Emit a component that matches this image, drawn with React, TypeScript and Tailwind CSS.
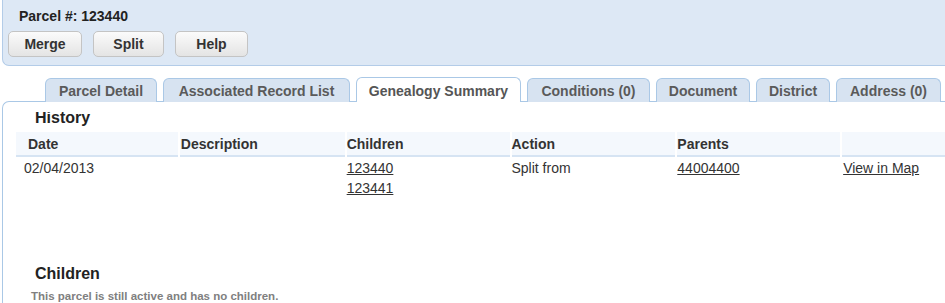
import React from "react";

const tabs = [
  { label: "Parcel Detail", w: 112, active: false },
  { label: "Associated Record List", w: 187, active: false },
  { label: "Genealogy Summary", w: 165, active: true },
  { label: "Conditions (0)", w: 123, active: false },
  { label: "Document", w: 94, active: false },
  { label: "District", w: 74, active: false },
  { label: "Address (0)", w: 105, active: false },
];

const cols = [
  { label: "Date", w: 162, pl: 12 },
  { label: "Description", w: 165, pl: 1 },
  { label: "Children", w: 163, pl: 0 },
  { label: "Action", w: 164, pl: 0 },
  { label: "Parents", w: 163, pl: 0 },
  { label: "", w: 120, pl: 0 },
];

function Btn({ label, w }: { label: string; w: number }) {
  return (
    <button
      className="h-[26px] rounded-[5px] border border-[#c4c4c4] bg-gradient-to-b from-[#fbfbfb] to-[#e4e4e4] text-[14px] font-bold text-[#333]"
      style={{ width: w }}
    >
      {label}
    </button>
  );
}

export default function App() {
  return (
    <div
      className="w-[945px] h-[303px] overflow-hidden bg-white text-[#333]"
      style={{ fontFamily: '"Liberation Sans", Arial, sans-serif' }}
    >
      {/* header */}
      <div className="ml-[2px] h-[66px] w-[960px] rounded-bl-[7px] border-l border-b border-[#b3cce8] bg-[#dde8f5]">
        <div className="pl-[16px] pt-[6px] text-[14px] font-bold leading-[20px] text-[#222]">
          Parcel #: 123440
        </div>
        <div className="mt-[5px] flex gap-[11px] pl-[5px]">
          <Btn label="Merge" w={74} />
          <Btn label="Split" w={71} />
          <Btn label="Help" w={73} />
        </div>
      </div>

      {/* tabs */}
      <div className="mt-[11px] flex h-[25px] items-end gap-[6px] pl-[45px]">
        {tabs.map((t) => (
          <div
            key={t.label}
            className={
              t.active
                ? "relative z-10 flex h-[25px] items-center justify-center rounded-t-[6px] border border-b-0 border-[#aac8e6] bg-white text-[14px] font-bold text-[#555]"
                : "flex h-[24px] items-center justify-center rounded-t-[6px] border border-b-0 border-[#aac8e6] bg-[#d7e3f1] text-[14px] font-bold text-[#5a5a5a]"
            }
            style={{ width: t.w, paddingTop: 2 }}
          >
            {t.label}
          </div>
        ))}
      </div>

      {/* content */}
      <div className="ml-[2px] -mt-px h-[220px] w-[960px] rounded-tl-[7px] border-l border-t border-[#aac8e6] bg-white">
        <div className="mt-[10px] h-[211px] overflow-hidden">
          <div className="-mt-[3px] pl-[32px] text-[16px] font-bold leading-[18px] text-[#222]">
            History
          </div>
          <div className="mt-[5px] ml-[13px] flex gap-[2px]">
            {cols.map((c, i) => (
              <div
                key={i}
                className="h-[25px] border-b-2 border-[#d6e4f3] bg-[#f4f8fd] text-[14px] font-bold leading-[24px] text-[#333]"
                style={{ width: c.w, paddingLeft: c.pl }}
              >
                {c.label}
              </div>
            ))}
          </div>
          <div className="ml-[13px] mt-[1px] flex gap-[2px] text-[14px] leading-[20px] text-[#333]">
            <div className="w-[162px] pl-[8px]">02/04/2013</div>
            <div className="w-[165px]"></div>
            <div className="flex w-[163px] flex-col">
              <a className="underline leading-[20px]">123440</a>
              <a className="underline leading-[20px]">123441</a>
            </div>
            <div className="w-[164px]">Split from</div>
            <div className="w-[163px]">
              <a className="underline">44004400</a>
            </div>
            <div className="w-[120px] pl-[1px]">
              <a className="underline">View in Map</a>
            </div>
          </div>
          <div className="mt-[66px] pl-[32px] text-[16px] font-bold leading-[20px] text-[#222]">
            Children
          </div>
          <div className="mt-[6px] ml-[12px] border-b border-[#dcdcdc] pl-[16px] text-[11.5px] font-bold leading-[13px] text-[#808080]">
            This parcel is still active and has no children.
          </div>
        </div>
      </div>
    </div>
  );
}
